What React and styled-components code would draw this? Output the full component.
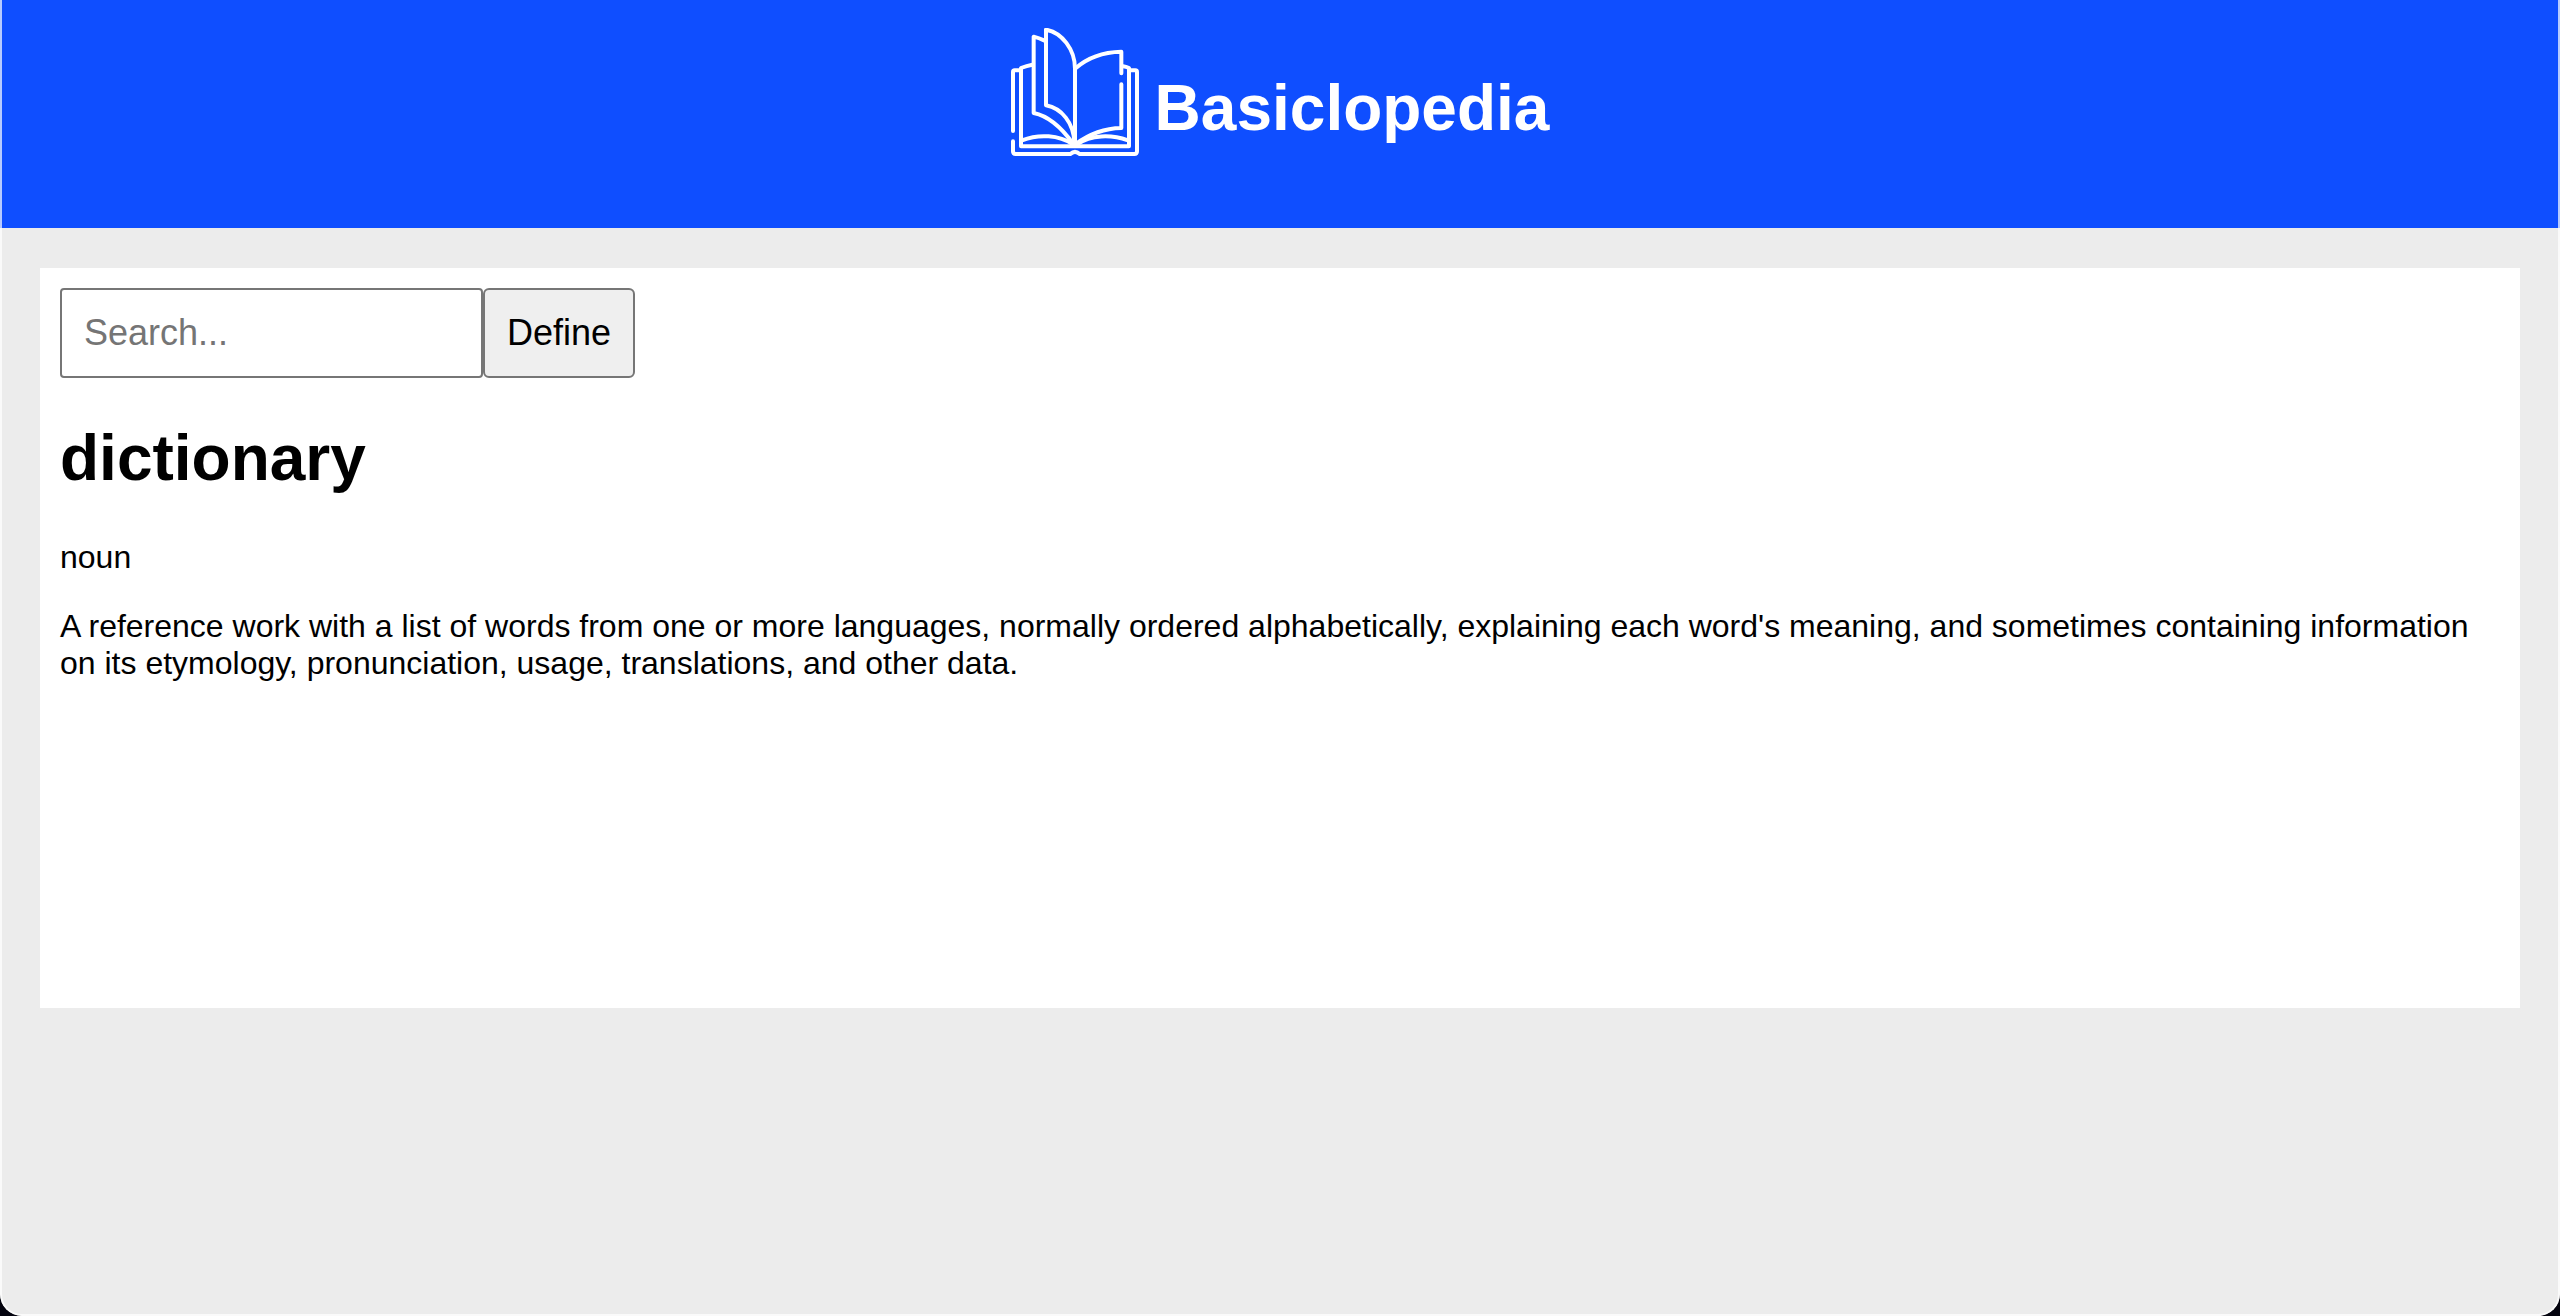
import React, { useState } from "react";
import styled, { createGlobalStyle } from "styled-components";

const GlobalStyle = createGlobalStyle`
  *, *::before, *::after { box-sizing: border-box; }
  body {
    margin: 0;
    background: #04040f;
    color: #000;
    font: 32px/37px "Liberation Sans", Arial, Helvetica, sans-serif;
  }
`;

const Page = styled.div`
  display: flex;
  flex-direction: column;
  min-height: 100vh;
  overflow: hidden;
  background: #ececec;
  border-radius: 0 0 22px 22px;
`;

const Header = styled.header`
  display: flex;
  align-items: flex-start;
  justify-content: center;
  gap: 16px;
  padding: 28px 40px 72px;
  background: #0f4eff;
  color: #fff;
  border: solid #b7caff;
  border-width: 0 2px;
`;

const Logo = styled.svg`
  width: 128px;
  height: 128px;
  fill: none;
  stroke: currentColor;
  stroke-width: 12;
  stroke-linecap: round;
  stroke-linejoin: round;
`;

const SiteName = styled.h1`
  margin: 43px 0 0;
  font-size: 64px;
  line-height: 74px;
`;

const Main = styled.main`
  flex: 1;
  padding: 40px 38px;
  border: solid #fafafa;
  border-width: 0 2px 2px;
  border-radius: 0 0 22px 22px;
`;

const Card = styled.section`
  min-height: 740px;
  padding: 20px;
  background: #fff;
`;

const SearchForm = styled.form`
  display: flex;
`;

const SearchInput = styled.input`
  width: 423px;
  height: 90px;
  padding: 0 22px;
  border: 2px solid #767676;
  border-radius: 4px;
  background: #fff;
  font: inherit;
  font-size: 36px;
  &::placeholder { color: #757575; opacity: 1; }
`;

const DefineButton = styled.button`
  height: 90px;
  padding: 0 22px 2px;
  border: 2px solid #767676;
  border-radius: 6px;
  background: #efefef;
  color: #000;
  font: inherit;
  font-size: 36px;
`;

const Word = styled.h2`
  margin: 43px 0 44px;
  font-size: 64px;
  line-height: 74px;
`;

const Text = styled.p`
  margin: 0 0 32px;
`;

function BookLogo() {
  return (
    <Logo viewBox="33 36 384 384" aria-hidden="true">
      <path d="M39 345V168Q39 163 44 163H62" />
      <path d="M39 376V406Q39 414 47 414H211Q225 401 239 414H403Q411 414 411 406V168Q411 163 406 163H388" />
      <path d="M97 146Q80 149 63 156V391H387V156Q378 152 369 151" />
      <path d="M132 73Q117 66 101 62V291C145 300 185 335 219 383" />
      <path d="M225 385V158C225 100 185 49 138 41V268C185 277 221 320 223 380" />
      <path d="M225 158C263 124 311 108 364 107V172" />
      <path d="M364 205V336C310 337 265 356 227 384" />
      <path d="M66 373C117 353 177 357 219 385M384 373C333 355 273 356 231 385" />
    </Logo>
  );
}

export default function App() {
  const [query, setQuery] = useState("");
  return (
    <>
      <GlobalStyle />
      <Page>
        <Header>
          <BookLogo />
          <SiteName>Basiclopedia</SiteName>
        </Header>
        <Main>
          <Card>
            <SearchForm onSubmit={(e) => e.preventDefault()}>
              <SearchInput
                type="text"
                aria-label="Search"
                placeholder="Search..."
                value={query}
                onChange={(e) => setQuery(e.target.value)}
              />
              <DefineButton type="submit">Define</DefineButton>
            </SearchForm>
            <Word>dictionary</Word>
            <Text>noun</Text>
            <Text>
              A reference work with a list of words from one or more languages,
              normally ordered alphabetically, explaining each word's meaning,
              and sometimes containing information on its etymology,
              pronunciation, usage, translations, and other data.
            </Text>
          </Card>
        </Main>
      </Page>
    </>
  );
}
